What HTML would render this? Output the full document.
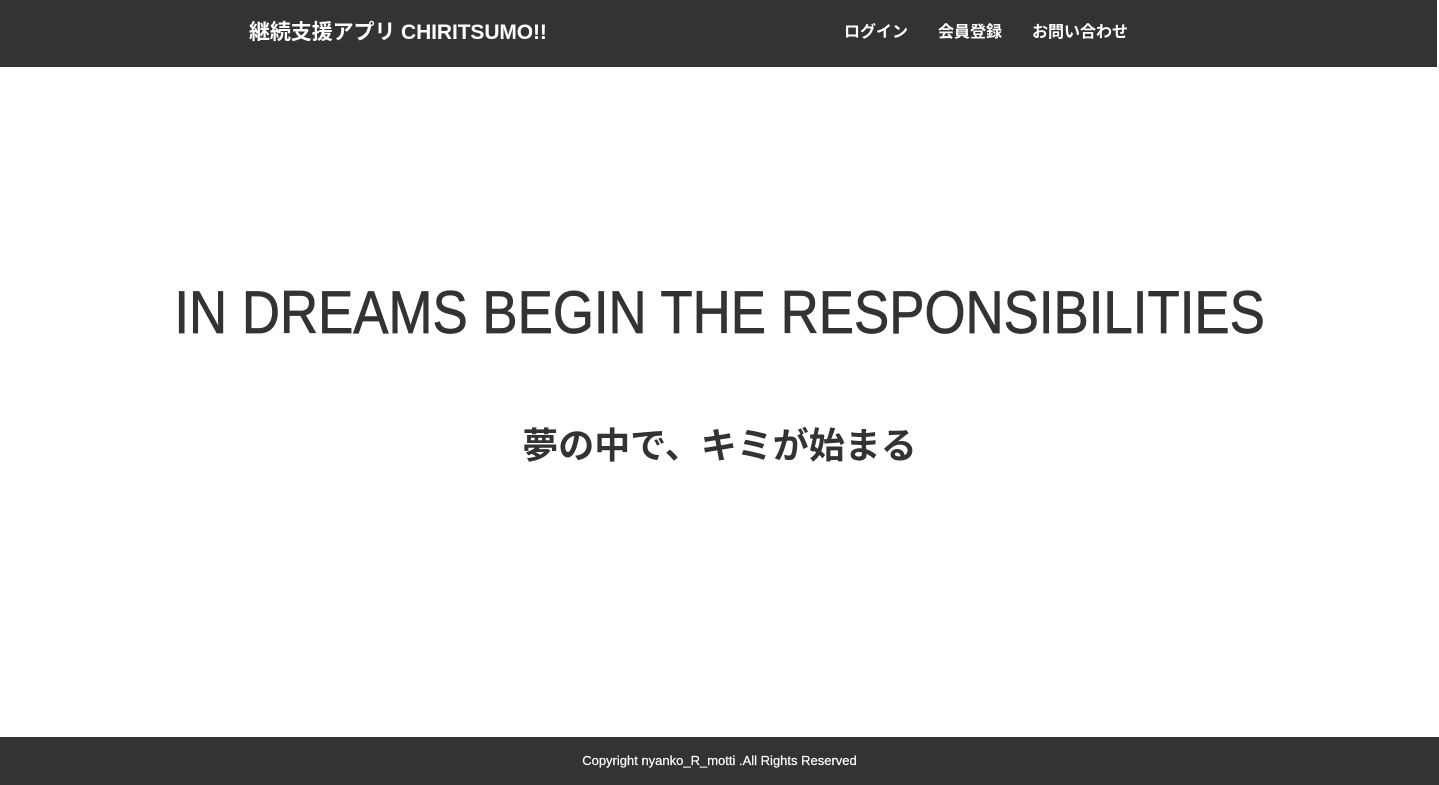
<!DOCTYPE html>
<html><head><meta charset="utf-8"><style>
*{margin:0;padding:0;box-sizing:border-box}
body{width:1439px;height:785px;background:#fff;font-family:"Liberation Sans","Noto Sans CJK JP",sans-serif;color:#333;position:relative;overflow:hidden}
header{position:absolute;left:0;top:0;width:1437px;height:67px;background:#333;color:#fff}
.logo{position:absolute;left:249px;top:19px;font-size:21px;font-weight:bold;line-height:28px;letter-spacing:-0.1px}
nav{position:absolute;left:844px;top:22px;font-size:16px;font-weight:bold;line-height:22px;white-space:nowrap}
nav span{position:absolute;top:0}
h1{position:absolute;left:0;width:1439px;top:280px;text-align:center;font-size:60px;font-weight:normal;line-height:66px;white-space:nowrap}
h1 span{display:inline-block;transform:scaleX(0.88);-webkit-text-stroke:0.8px #333}
h2{position:absolute;left:0;width:1439px;top:424px;text-align:center;font-size:36px;font-weight:bold;line-height:44px}
footer{position:absolute;left:0;top:737px;width:1439px;height:48px;background:#333;color:#fff;font-size:13px;text-align:center;line-height:48px;-webkit-text-stroke:0.2px #fff}
</style></head><body>
<header><div class="logo">継続支援アプリ CHIRITSUMO!!</div>
<nav><span style="left:0">ログイン</span><span style="left:94px">会員登録</span><span style="left:188px">お問い合わせ</span></nav></header>
<h1><span>IN DREAMS BEGIN THE RESPONSIBILITIES</span></h1>
<h2>夢の中で、キミが始まる</h2>
<footer>Copyright nyanko_R_motti .All Rights Reserved</footer>
</body></html>
